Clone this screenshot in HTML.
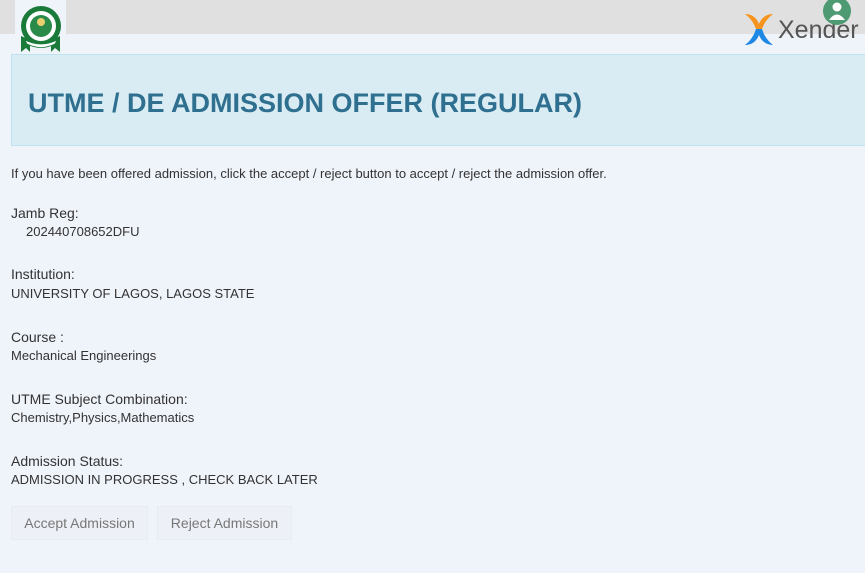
<!DOCTYPE html>
<html><head><meta charset="utf-8"><style>
*{margin:0;padding:0;box-sizing:border-box}
body{width:865px;height:573px;overflow:hidden;background:#eff3fa;font-family:"Liberation Sans",Arial,sans-serif;color:#333;position:relative}
.top{position:absolute;left:0;top:0;width:865px;height:34px;background:#e0e0e0}
.logo{position:absolute;left:15px;top:0;width:51px;height:55px;background:#eff3fa}
.hdr{position:absolute;left:11px;top:54px;width:870px;height:92px;background:#d9ecf3;border:1px solid #bfe3ee}
.hdr h1{position:absolute;left:16px;top:33px;font-size:27px;font-weight:bold;color:#2f6f8f}
.t{position:absolute;left:11px;white-space:nowrap}
.p{font-size:13px}
.l{font-size:14px;color:#333}
.v{font-size:13px}
.btn{position:absolute;top:506px;height:34px;background:#edf1f7;border:1px solid #e8ecf2;color:#777;font-size:14px;line-height:32px;text-align:center}
.xen{position:absolute;left:778px;top:16px;font-size:25px;color:#555}
</style></head><body>
<div class="top"></div>
<div class="logo">
<svg width="51" height="55" viewBox="0 0 51 55">
<path d="M6 36 L6 52 L11 48 L15 52 L15 40Z" fill="#1a7a3a"/>
<path d="M45 36 L45 52 L40 48 L36 52 L36 40Z" fill="#1a7a3a"/>
<circle cx="26" cy="26" r="20" fill="#1a7a3a"/>
<circle cx="26" cy="26" r="15" fill="#fff"/>
<circle cx="26" cy="26" r="11" fill="#2a8a4a"/>
<circle cx="26" cy="22" r="4" fill="#e8d070"/>
<path d="M10 40 Q26 48 42 40 L40 44 Q26 51 12 44Z" fill="#fff" stroke="#1a7a3a" stroke-width="0.8"/>
</svg></div>
<svg style="position:absolute;left:743px;top:12px" width="32" height="35" viewBox="0 0 32 35">
<path d="M2 2 Q12 2 16 12 Q20 2 30 2 Q22 8 19 17 L13 17 Q10 8 2 2Z" fill="#f7941d"/>
<path d="M13 17 L19 17 Q22 27 30 33 Q20 33 16 23 Q12 33 2 33 Q10 27 13 17Z" fill="#1e88e5"/>
</svg>
<div class="xen">Xender</div>
<svg style="position:absolute;left:822px;top:0" width="30" height="26" viewBox="0 0 30 26">
<circle cx="15" cy="11" r="14" fill="#4e9a72"/>
<circle cx="15" cy="7" r="4.5" fill="#fff"/>
<path d="M7 20 Q15 9 23 20Z" fill="#fff"/>
</svg>
<div class="hdr"><h1>UTME / DE ADMISSION OFFER (REGULAR)</h1></div>
<div class="t p" style="top:166px">If you have been offered admission, click the accept / reject button to accept / reject the admission offer.</div>
<div class="t l" style="top:205px">Jamb Reg:</div>
<div class="t v" style="top:224px;left:26px">202440708652DFU</div>
<div class="t l" style="top:266px">Institution:</div>
<div class="t v" style="top:286px">UNIVERSITY OF LAGOS, LAGOS STATE</div>
<div class="t l" style="top:329px">Course :</div>
<div class="t v" style="top:348px">Mechanical Engineerings</div>
<div class="t l" style="top:391px">UTME Subject Combination:</div>
<div class="t v" style="top:410px">Chemistry,Physics,Mathematics</div>
<div class="t l" style="top:453px">Admission Status:</div>
<div class="t v" style="top:472px">ADMISSION IN PROGRESS , CHECK BACK LATER</div>
<div class="btn" style="left:11px;width:137px">Accept Admission</div>
<div class="btn" style="left:157px;width:135px">Reject Admission</div>
</body></html>
